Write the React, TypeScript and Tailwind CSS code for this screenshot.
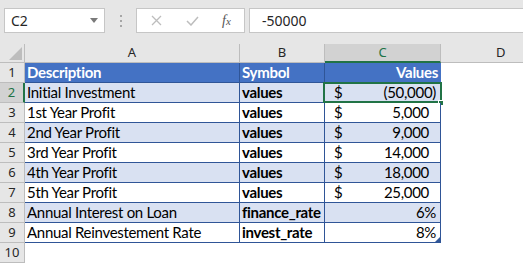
import React from 'react';

type Row = { n: number; desc: string; sym: string; cur?: boolean; val: string };

const rows: Row[] = [
  { n: 2, desc: 'Initial Investment', sym: 'values', cur: true, val: '(50,000)' },
  { n: 3, desc: '1st Year Profit', sym: 'values', cur: true, val: '5,000' },
  { n: 4, desc: '2nd Year Profit', sym: 'values', cur: true, val: '9,000' },
  { n: 5, desc: '3rd Year Profit', sym: 'values', cur: true, val: '14,000' },
  { n: 6, desc: '4th Year Profit', sym: 'values', cur: true, val: '18,000' },
  { n: 7, desc: '5th Year Profit', sym: 'values', cur: true, val: '25,000' },
  { n: 8, desc: 'Annual Interest on Loan', sym: 'finance_rate', val: '6%' },
  { n: 9, desc: 'Annual Reinvestement Rate', sym: 'invest_rate', val: '8%' },
];

const cellFont = "font-['Lato','Liberation_Sans',sans-serif] text-[15px] tracking-[-0.3px] text-black";

function RowHeader({ n, active }: { n: number; active?: boolean }) {
  return (
    <div
      className={`h-5 flex items-center justify-center border-b border-r border-[#bdbdbd] text-[13px] font-['Noto_Sans',sans-serif] ${
        active ? 'bg-[#d2d2d2] text-[#217346] border-r-2 border-r-[#217346]' : 'bg-[#e6e6e6] text-[#262626]'
      }`}
    >
      {n}
    </div>
  );
}

export default function App() {
  return (
    <div className="w-[523px] h-[263px] overflow-hidden bg-white">
      {/* Formula bar */}
      <div className="h-11 bg-[#e6e6e6] flex items-start pt-2 pl-1 gap-0">
        <div className="w-[101px] h-[25px] bg-white border border-[#c6c6c6] flex items-center justify-between pl-[6px] pr-[6px]">
          <span className="text-[14px] text-[#262626] font-['Noto_Sans',sans-serif]">C2</span>
          <svg width="8" height="5" viewBox="0 0 8 5">
            <path d="M0 0h8L4 5z" fill="#7a7a7a" />
          </svg>
        </div>
        <div className="w-[31px] h-[25px] flex flex-col items-center justify-center gap-[3px]">
          <span className="w-[2px] h-[2px] bg-[#a6a6a6]" />
          <span className="w-[2px] h-[2px] bg-[#a6a6a6]" />
          <span className="w-[2px] h-[2px] bg-[#a6a6a6]" />
        </div>
        <div className="w-[109px] h-[25px] bg-white border border-[#c6c6c6] flex items-center">
          <div className="w-[38px] flex justify-center">
            <svg width="11" height="11" viewBox="0 0 11 11">
              <path d="M1 1l9 9M10 1l-9 9" stroke="#bdbdbd" strokeWidth="1.3" />
            </svg>
          </div>
          <div className="w-[34px] flex justify-center">
            <svg width="13" height="10" viewBox="0 0 13 10">
              <path d="M1 5l4 4 7-8" stroke="#bdbdbd" strokeWidth="1.5" fill="none" />
            </svg>
          </div>
          <div className="flex-1 flex justify-center">
            <span className="font-['Liberation_Serif',serif] italic text-[14px] text-[#555]">
              f<span className="text-[11px]">x</span>
            </span>
          </div>
        </div>
        <div className="ml-1 flex-1 h-[25px] bg-white border border-[#c6c6c6] border-r-0 flex items-center pl-3">
          <span className="text-[14px] text-[#262626] font-['Noto_Sans',sans-serif]">-50000</span>
        </div>
      </div>

      {/* Grid */}
      <div className="grid grid-cols-[25px_215px_85px_116px_1fr]">
        {/* Column headers */}
        <div className="h-[19px] bg-[#e6e6e6] border-r border-b border-[#bdbdbd] flex items-end justify-end p-[2px]">
          <svg width="13" height="13" viewBox="0 0 13 13">
            <path d="M13 0v13H0z" fill="#bdbdbd" />
          </svg>
        </div>
        {['A', 'B'].map((c) => (
          <div
            key={c}
            className="h-[19px] bg-[#e6e6e6] border-r border-b border-[#bdbdbd] flex items-center justify-center text-[13px] text-[#262626] font-['Noto_Sans',sans-serif]"
          >
            {c}
          </div>
        ))}
        <div className="h-[19px] bg-[#d2d2d2] border-r border-[#bdbdbd] border-b-2 border-b-[#217346] flex items-center justify-center text-[13px] text-[#217346] font-['Noto_Sans',sans-serif]">
          C
        </div>
        <div className="h-[19px] bg-[#e6e6e6] border-b border-[#bdbdbd] flex items-center pl-[55px] text-[13px] text-[#262626] font-['Noto_Sans',sans-serif]">
          D
        </div>

        {/* Row 1 */}
        <RowHeader n={1} />
        <div className={`h-5 bg-[#4472c4] border-r border-b border-[#2f5597] flex items-center pl-[2px] font-bold !text-white ${cellFont}`}>
          Description
        </div>
        <div className={`h-5 bg-[#4472c4] border-r border-b border-[#2f5597] flex items-center pl-[2px] font-bold !text-white ${cellFont}`}>
          Symbol
        </div>
        <div className={`h-5 bg-[#4472c4] border-b border-[#2f5597] flex items-center justify-end pr-[3px] font-bold !text-white ${cellFont}`}>
          Values
        </div>
        <div className="h-5" />

        {rows.map((r) => {
          const bg = r.n % 2 === 0 ? 'bg-[#d9e1f2]' : 'bg-white';
          const sel = r.n === 2;
          return (
            <React.Fragment key={r.n}>
              <RowHeader n={r.n} active={sel} />
              <div className={`h-5 ${bg} border-r border-b border-[#2f5597] flex items-center pl-[2px] ${cellFont}`}>
                {r.desc}
              </div>
              <div className={`h-5 ${bg} border-r border-b border-[#2f5597] flex items-center pl-[2px] font-bold ${cellFont}`}>
                {r.sym}
              </div>
              <div
                className={`relative h-5 ${bg} border-r border-b border-[#2f5597] flex items-center justify-between pl-[9px] pr-[4px] ${cellFont}`}
              >
                <span>{r.cur ? '$' : ''}</span>
                <span className={sel ? 'pr-0' : r.cur ? 'pr-[7px]' : 'pr-0'}>{r.val}</span>
                {sel && (
                  <>
                    <div className="absolute -left-[2px] -top-[1px] -right-[2px] -bottom-[1px] border-2 border-[#217346] pointer-events-none" />
                    <div className="absolute -right-[4px] -bottom-[4px] w-[6px] h-[6px] bg-[#217346] border border-white" />
                  </>
                )}
                {r.n === 9 && (
                  <svg className="absolute right-0 bottom-0" width="5" height="5" viewBox="0 0 5 5">
                    <path d="M5 0v5H0z" fill="#2f5597" />
                  </svg>
                )}
              </div>
              <div className="h-5" />
            </React.Fragment>
          );
        })}

        {/* Row 10 */}
        <RowHeader n={10} />
        <div className="h-5" />
        <div className="h-5" />
        <div className="h-5" />
        <div className="h-5" />
      </div>
    </div>
  );
}
